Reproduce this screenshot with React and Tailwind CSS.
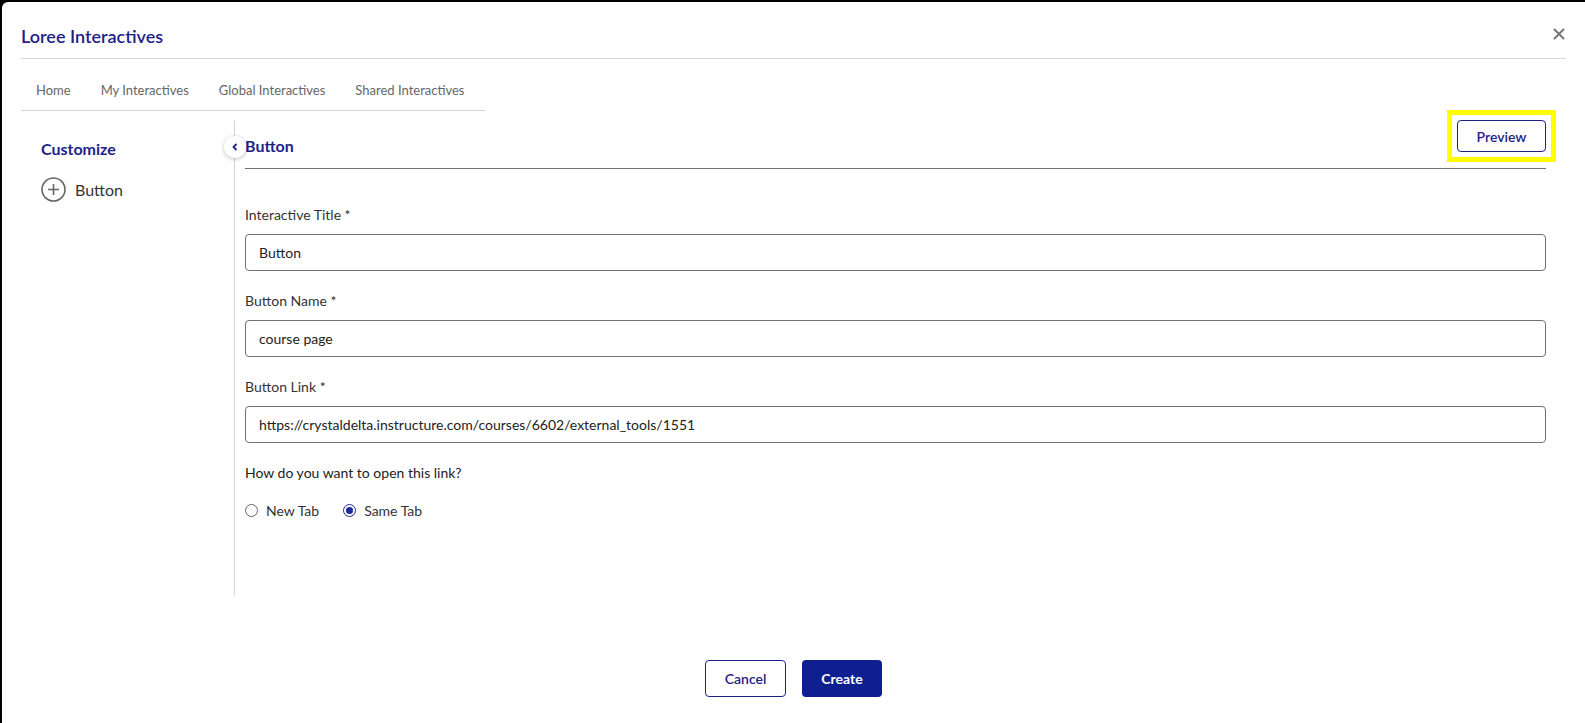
import React, { useState } from "react";

const tabs = ["Home", "My Interactives", "Global Interactives", "Shared Interactives"];

function Field({ label, value, onChange, first }) {
  return (
    <div className={first ? "mt-[36px]" : "mt-[20px]"}>
      <label className="block h-[20px] leading-[20px] text-[14px] text-[#333]">{label}</label>
      <input
        value={value}
        onChange={onChange}
        className="mt-[9px] w-full h-[37px] px-[13px] text-[14px] text-[#222] border border-[#707070] rounded-[4px] outline-none"
      />
    </div>
  );
}

function Radio({ checked, label, onClick }) {
  return (
    <button onClick={onClick} className="flex items-center gap-[8px] text-[14px] text-[#333]">
      <span
        className={
          "w-[13px] h-[13px] rounded-full border flex items-center justify-center " +
          (checked ? "border-[#1b2a96]" : "border-[#666]")
        }
      >
        {checked && <span className="w-[7px] h-[7px] rounded-full bg-[#1b2a96]" />}
      </span>
      {label}
    </button>
  );
}

export default function App() {
  const [form, setForm] = useState({
    title: "Button",
    name: "course page",
    link: "https://crystaldelta.instructure.com/courses/6602/external_tools/1551",
  });
  const [openIn, setOpenIn] = useState("same");

  const set = (key) => (e) => setForm({ ...form, [key]: e.target.value });

  return (
    <div className="h-screen w-full bg-black pt-[2px] pl-[2px] font-['Lato',sans-serif]">
      <div className="h-full bg-white rounded-tl-[6px] flex flex-col">
        {/* Header */}
        <div className="ml-[19px] mr-[19px] h-[57px] pt-[22px] flex justify-between border-b border-[#d6d6d6]">
          <h1 className="text-[18px] leading-[24px] font-semibold text-[#1e2288]">Loree Interactives</h1>
          <button className="mt-[4px] mr-[1px] h-[12px] w-[12px]">
            <svg width="12" height="12" viewBox="0 0 12 12" stroke="#777" strokeWidth="2" strokeLinecap="round">
              <path d="M1.5 1.5l9 9M10.5 1.5l-9 9" />
            </svg>
          </button>
        </div>

        {/* Tabs */}
        <div className="ml-[19px] w-[464px] h-[52px] pt-[12px] flex items-center border-b border-[#d6d6d6]">
          {tabs.map((t) => (
            <span key={t} className="shrink-0 whitespace-nowrap px-[15px] text-[13px] text-[#666]">
              {t}
            </span>
          ))}
        </div>

        {/* Body */}
        <div className="mt-[9px] h-[475px] flex">
          <aside className="relative w-[233px] shrink-0 border-r border-[#d4d4e0] pl-[39px] pt-[19px]">
            <h2 className="text-[16px] leading-[20px] font-bold text-[#1e2288]">Customize</h2>
            <div className="mt-[18px] flex items-center gap-[9px]">
              <svg width="25" height="25" viewBox="0 0 25 25" fill="none" stroke="#666" strokeWidth="1.6">
                <circle cx="12.5" cy="12.5" r="11.5" />
                <path d="M12.5 7v11M7 12.5h11" />
              </svg>
              <span className="text-[16px] text-[#333]">Button</span>
            </div>
            <button className="absolute top-[16px] -right-[12px] w-[22px] h-[22px] rounded-full bg-white shadow-[0_1px_4px_rgba(0,0,0,0.25)] flex items-center justify-center">
              <svg width="10" height="10" viewBox="0 0 10 10" fill="none" stroke="#1e2288" strokeWidth="1.8">
                <path d="M6.5 2 3.5 5l3 3" />
              </svg>
            </button>
          </aside>

          <main className="flex-1 pl-[10px] pr-[39px]">
            <div className="h-[49px] flex justify-between border-b border-[#707070]">
              <h3 className="self-end mb-[12px] text-[16px] leading-[20px] font-bold text-[#1e2288]">Button</h3>
              <div className="relative self-start">
                <button className="w-[89px] h-[32px] rounded-[4px] border border-[#1e2288] text-[14px] font-semibold text-[#1e2288]">
                  Preview
                </button>
                <span className="absolute -inset-[10px] border-[5px] border-[#ffff00] pointer-events-none" />
              </div>
            </div>

            <Field first label="Interactive Title *" value={form.title} onChange={set("title")} />
            <Field label="Button Name *" value={form.name} onChange={set("name")} />
            <Field label="Button Link *" value={form.link} onChange={set("link")} />

            <p className="mt-[20px] h-[20px] leading-[20px] text-[14px] text-[#222]">
              How do you want to open this link?
            </p>
            <div className="mt-[17px] h-[20px] flex items-center gap-[24px]">
              <Radio label="New Tab" checked={openIn === "new"} onClick={() => setOpenIn("new")} />
              <Radio label="Same Tab" checked={openIn === "same"} onClick={() => setOpenIn("same")} />
            </div>
          </main>
        </div>

        {/* Footer */}
        <div className="mt-[65px] flex justify-center gap-[16px]">
          <button className="w-[81px] h-[37px] rounded-[4px] border border-[#1e2288] text-[14px] font-semibold text-[#1e2288]">
            Cancel
          </button>
          <button className="w-[80px] h-[37px] rounded-[4px] bg-[#0f1f8f] text-[14px] font-bold text-white">
            Create
          </button>
        </div>
      </div>
    </div>
  );
}
